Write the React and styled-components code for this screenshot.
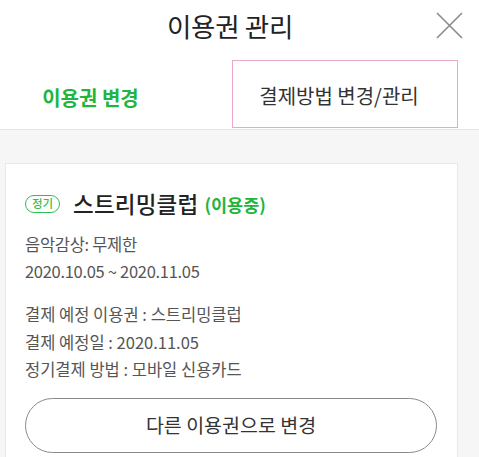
import React from "react";
import styled, { createGlobalStyle } from "styled-components";

const Global = createGlobalStyle`
  html, body { margin: 0; padding: 0; background: #f6f6f6; }
  body { font-family: "Noto Sans CJK KR", "Noto Sans", sans-serif; }
  * { box-sizing: border-box; }
`;

const Page = styled.div`
  width: 479px;
  height: 457px;
  overflow: hidden;
  background: #f6f6f6;
`;

const Top = styled.div`
  background: #fff;
  border-bottom: 1px solid #e4e4e4;
`;

const Header = styled.header`
  position: relative;
  height: 60px;
  display: flex;
  align-items: center;
  justify-content: center;
  padding-right: 19px;
`;

const Title = styled.h1`
  margin: 0;
  margin-top: -10px;
  font-size: 26.5px;
  font-weight: 400;
  color: #222;
  letter-spacing: -0.3px;
`;

const Close = styled.button`
  position: absolute;
  right: 16px;
  top: 11px;
  width: 28px;
  height: 28px;
  padding: 0;
  border: 0;
  background: none;
  display: flex;
  align-items: center;
  justify-content: center;
`;

const Tabs = styled.nav`
  display: flex;
  height: 69px;
`;

const Tab = styled.div`
  width: ${(p) => p.$w}px;
  margin-left: ${(p) => p.$ml || 0}px;
  height: ${(p) => (p.$boxed ? 68 : 69)}px;
  display: flex;
  align-items: center;
  justify-content: center;
  padding-top: ${(p) => (p.$boxed ? 2 : 5)}px;
  padding-right: ${(p) => (p.$boxed ? 12 : 0)}px;
  font-size: 20px;
  font-weight: ${(p) => (p.$active ? 700 : 400)};
  color: ${(p) => (p.$active ? "#1fb53f" : "#333")};
  border: ${(p) => (p.$boxed ? "1px solid #eaa9c8" : "none")};
`;

const Body = styled.main`
  padding: 33px 21px 0 5px;
`;

const Card = styled.section`
  background: #fff;
  border: 1px solid #e9e9e9;
  padding: 24px 20px 30px 19px;
`;

const NameRow = styled.div`
  display: flex;
  align-items: center;
  height: 30px;
`;

const Badge = styled.span`
  display: inline-flex;
  align-items: center;
  justify-content: center;
  width: 35px;
  height: 18px;
  border: 1.5px solid #2fbf4f;
  border-radius: 9px;
  color: #2fbf4f;
  font-size: 11.5px;
  font-weight: 500;
  line-height: 1;
  margin-right: 13px;
  margin-top: 1px;
`;

const Name = styled.span`
  font-size: 22.5px;
  font-weight: 500;
  color: #222;
  letter-spacing: 0.2px;
`;

const Status = styled.span`
  font-size: 17.5px;
  font-weight: 700;
  color: #1fb53f;
  margin-left: 6px;
  margin-top: 3px;
`;

const InfoGroup = styled.div`
  margin-top: ${(p) => p.$mt}px;
`;

const Line = styled.p`
  margin: 0;
  font-size: 16.5px;
  line-height: ${(p) => p.$lh}px;
  color: #555;
  letter-spacing: ${(p) => p.$ls || 0}px;
`;

const ChangeButton = styled.button`
  display: flex;
  align-items: center;
  justify-content: center;
  width: 412px;
  height: 55px;
  margin-top: 14px;
  border: 1.5px solid #8a8a8a;
  border-radius: 28px;
  background: #fff;
  font-family: inherit;
  font-size: 19.5px;
  color: #333;
  padding: 0 0 2px;
`;

export default function App() {
  return (
    <Page>
      <Global />
      <Top>
        <Header>
          <Title>이용권 관리</Title>
          <Close aria-label="닫기">
            <svg width="27" height="27" viewBox="0 0 27 27">
              <path d="M1 1L26 26M26 1L1 26" stroke="#8a8a8a" strokeWidth="1.6" fill="none" />
            </svg>
          </Close>
        </Header>
        <Tabs>
          <Tab $w={181} $active>이용권 변경</Tab>
          <Tab $w={226} $ml={51} $boxed>결제방법 변경/관리</Tab>
        </Tabs>
      </Top>
      <Body>
        <Card>
          <NameRow>
            <Badge>정기</Badge>
            <Name>스트리밍클럽</Name>
            <Status>(이용중)</Status>
          </NameRow>
          <InfoGroup $mt={13}>
            <Line $lh={27} $ls={-0.3}>음악감상: 무제한</Line>
            <Line $lh={27} $ls={-0.3}>2020.10.05 ~ 2020.11.05</Line>
          </InfoGroup>
          <InfoGroup $mt={16}>
            <Line $lh={27.5}>결제 예정 이용권 : 스트리밍클럽</Line>
            <Line $lh={27.5}>결제 예정일 : 2020.11.05</Line>
            <Line $lh={27.5}>정기결제 방법 : 모바일 신용카드</Line>
          </InfoGroup>
          <ChangeButton>다른 이용권으로 변경</ChangeButton>
        </Card>
      </Body>
    </Page>
  );
}
